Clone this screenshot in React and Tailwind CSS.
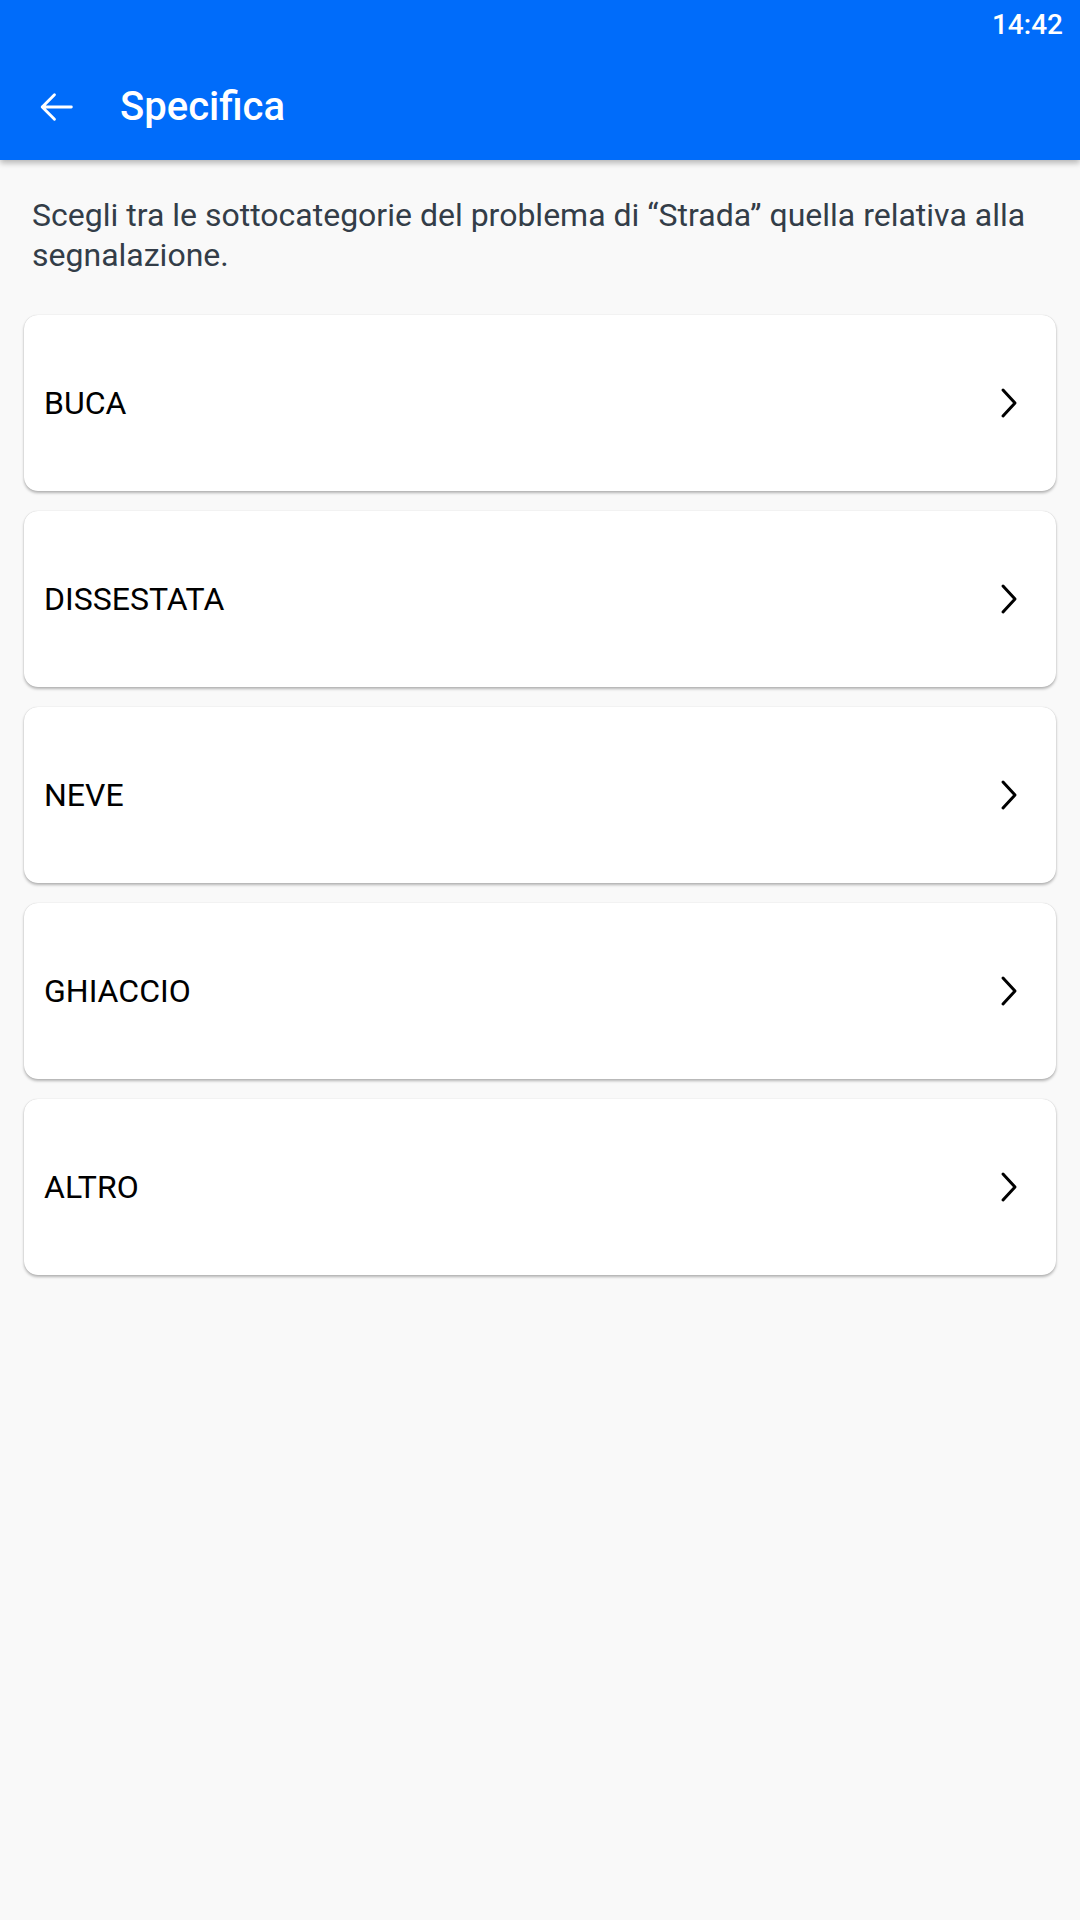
import React from "react";

const items = ["BUCA", "DISSESTATA", "NEVE", "GHIACCIO", "ALTRO"];

export default function App() {
  return (
    <div
      className="w-[1080px] min-h-[1920px] bg-[#f9f9f9]"
      style={{ fontFamily: "Roboto, 'Noto Sans', sans-serif" }}
    >
      <header className="relative z-10 bg-[#006cfa] shadow-[0_3px_6px_rgba(0,0,0,0.28)]">
        <div className="h-[50px] flex items-center justify-end pr-[17px]">
          <span className="text-white text-[28px] font-medium leading-none">14:42</span>
        </div>
        <div className="h-[110px] flex items-center pt-[4px]">
          <div className="w-[120px] flex items-center pl-[33px]">
            <svg width="46" height="46" viewBox="0 0 24 24" fill="none">
              <path
                d="M20 12H4.8M11.2 5.6L4.8 12l6.4 6.4"
                stroke="white"
                strokeWidth="1.5"
                strokeLinecap="round"
                strokeLinejoin="round"
              />
            </svg>
          </div>
          <h1 className="text-white text-[40px] font-medium leading-none">Specifica</h1>
        </div>
      </header>

      <p className="pt-[35px] pl-[32px] pr-[30px] text-[32px] leading-[40px] text-[#333d48]">
        Scegli tra le sottocategorie del problema di “Strada” quella relativa alla segnalazione.
      </p>

      <div className="mt-[40px] px-[24px] flex flex-col gap-[20px]">
        {items.map((label) => (
          <div
            key={label}
            className="h-[176px] bg-white rounded-[14px] flex items-center justify-between pl-[20px] pr-[38px] shadow-[0_2px_3px_rgba(0,0,0,0.28),0_0_1px_rgba(0,0,0,0.2)]"
          >
            <span className="text-[32px] text-black leading-none">{label}</span>
            <svg width="18" height="32" viewBox="0 0 18 32" fill="none">
              <path
                d="M3 3l12 13L3 29"
                stroke="black"
                strokeWidth="3"
                strokeLinecap="round"
                strokeLinejoin="round"
              />
            </svg>
          </div>
        ))}
      </div>
    </div>
  );
}
